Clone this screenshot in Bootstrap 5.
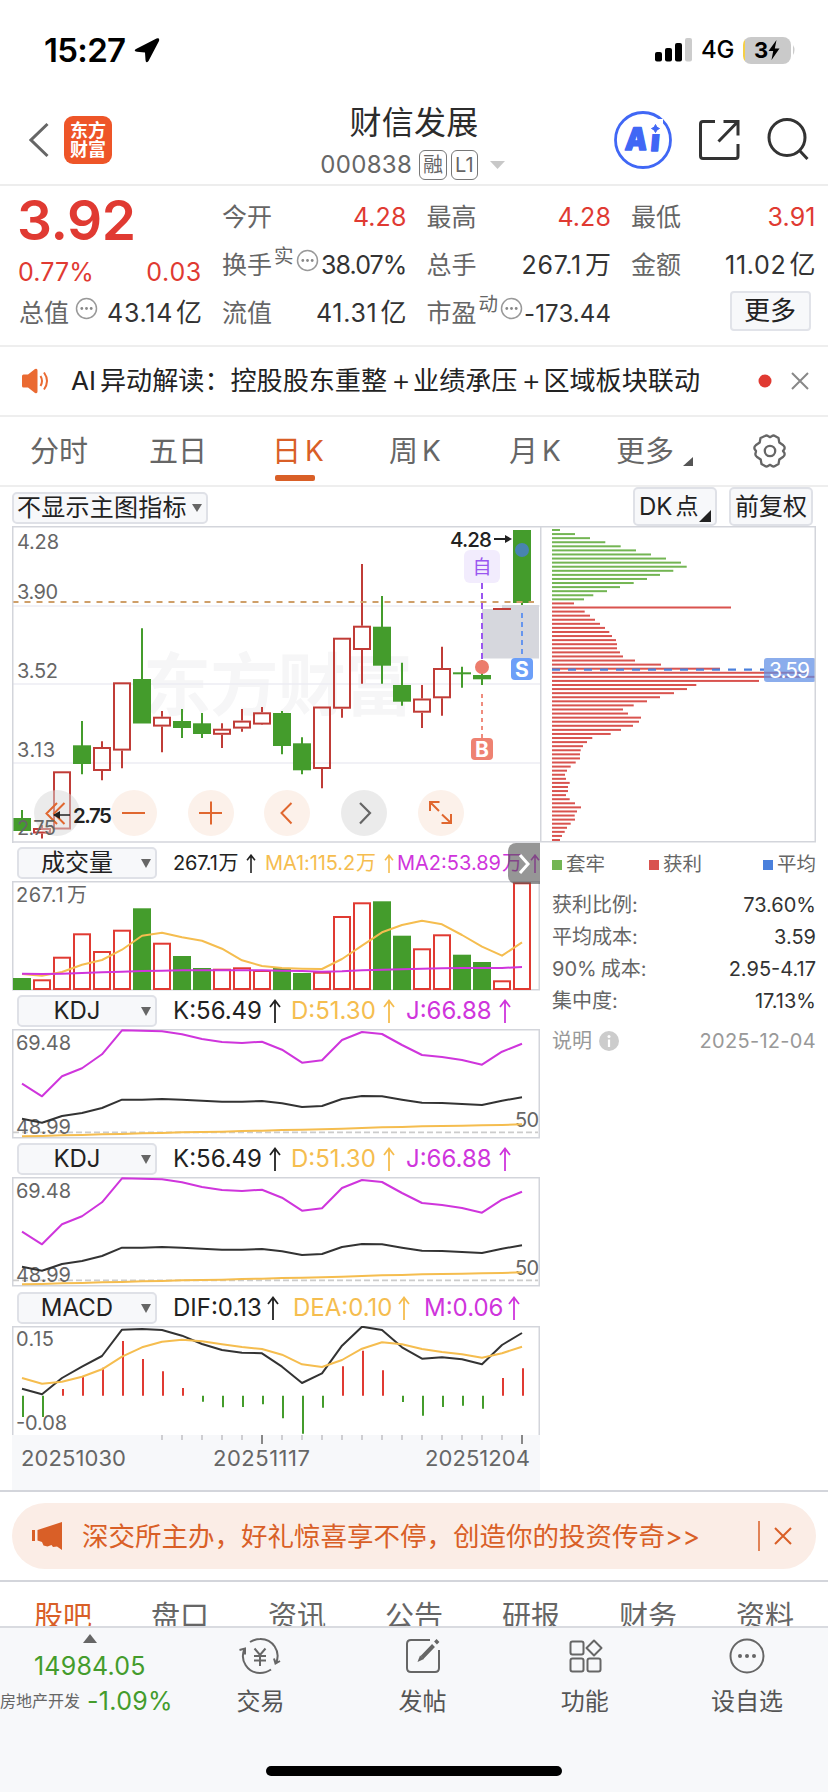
<!DOCTYPE html>
<html lang="zh-CN">
<head>
<meta charset="utf-8">
<meta name="viewport" content="width=device-width, initial-scale=1">
<title>财信发展 000838</title>
<link href="https://cdn.jsdelivr.net/npm/bootstrap@5.3.0/dist/css/bootstrap.min.css" rel="stylesheet">
<style>
  :root { --ink:#333; --grey:#666; --up:#e03a32; --down:#449c2c; --brand:#d95f27; --gold:#f5bd4f; --mag:#cf35dc; --edge:#d3d5db; --soft:#f7f8fa; }
  html, body { height:1792px; overflow:hidden; }
  body { width:828px; font-family:Inter,"Noto Sans CJK SC",sans-serif; color:var(--ink); line-height:1; background:#fff; white-space:nowrap; }
  svg { display:block; flex:none; }
  svg text { font-family:Inter,"Noto Sans CJK SC",sans-serif; }
  .c-up { color:var(--up); } .c-down { color:var(--down); } .c-grey { color:var(--grey); } .c-brand { color:var(--brand); }
  .c-gold { color:var(--gold); } .c-mag { color:var(--mag); }
  .status { height:97px; padding:3px 34px 0 44px; color:#000; }
  .clock { font-size:33px; font-weight:600; letter-spacing:-.7px; width:90px; }
  .net { font-size:24px; font-weight:500; width:42px; padding-left:8px; letter-spacing:-.2px; }
  .batt { width:48px; height:27px; border-radius:8px; background:linear-gradient(90deg,#f5cf45 2px,#cacaca 2px); font-size:22px; font-weight:700; }
  .topbar { height:89px; border-bottom:2px solid #ededed; padding-left:29px; padding-right:19px; padding-bottom:2px; }
  .logo { width:48px; height:48px; border-radius:9px; background:#ee5528; color:#fff; font-size:18px; font-weight:700; line-height:19px; margin-left:15px; padding-top:5px; }
  .heading { width:200px; margin-left:202px; padding-top:9px; }
  .heading h1 { font-size:32px; line-height:34px; margin:0; font-weight:400; color:#2c2c2c; letter-spacing:.3px; }
  .code { font-size:24px; letter-spacing:.3px; color:#666; height:42px; margin-left:-2px; margin-top:4px; }
  .tag { height:30px; border:1.5px solid #777; border-radius:6px; font-size:20px; letter-spacing:0; padding:1px 3px 0; line-height:26px; }
  .quote { height:161px; border-bottom:2px solid #eee; padding-left:19px; gap:20px; font-size:25px; }
  .qcol { width:184.5px; padding-top:7px; }
  .qrow { height:48px; }
  .v { letter-spacing:.1px; }
  .v.wide { letter-spacing:.7px; }
  .v.tight { letter-spacing:-.9px; }
  .v i { font-style:normal; margin-left:3px; font-size:26px; letter-spacing:0; }
  .last-price { font-size:55px; font-weight:600; height:62px; line-height:62px; letter-spacing:-.4px; color:var(--up); margin-left:-2px; }
  .more { width:81px; height:40px; border:2px solid #e1e3e9; border-radius:4px; background:var(--soft); font-size:26px; color:#222; margin:2px 5px 0 0; }
  .supr { font-size:19.5px; position:relative; top:-8px; margin-left:2px; }
  .dots { margin-left:2px; margin-top:-10px; }
  .alertline { height:70px; border-bottom:2px solid #eee; padding-left:22px; font-size:26.1px; color:#222; }
  .alertline b { font-weight:300; font-size:30px; line-height:26px; display:inline-block; width:26px; text-align:center; vertical-align:-1px; letter-spacing:-2px; }
  .periods { height:70px; border-bottom:2px solid #eee; font-size:29px; color:#666; }
  .periods > span { position:relative; height:68px; display:flex; align-items:center; }
  .periods i { font-style:normal; margin-left:4px; font-size:28px; }
  .periods .on { left:-2px; }
  .periods .on::after { content:""; position:absolute; left:3px; bottom:4px; width:40px; height:6px; border-radius:2px; background:var(--brand); }
  .pickrow { height:39px; padding-left:12px; padding-right:15px; font-size:24px; color:#222; }
  .chip { border:2px solid #dfe1e7; border-radius:5px; background:var(--soft); position:relative; }
  .frame { margin-left:12px; }
  .left { width:528px; }
  .right { width:277px; color:#333; font-size:20px; padding:0 1px 0 12px; }
  .right .ln { height:32px; }
  .sq { width:10px; height:10px; margin-right:4px; }
  .ihead { height:38px; padding:2px 0 0 5px; font-size:24px; position:relative; color:#222; }
  .ihead > span { flex:none; }
  .ihead .sel { width:140px; height:32px; margin-right:16px; font-size:24px; }
  .ihead .sel svg { position:absolute; right:4px; top:10px; }
  .ihead .nm { width:116px; text-align:center; }
  .ihead .vol { font-size:20px; }
  .arr { display:inline-block; width:12px; height:24px; margin-left:7px; vertical-align:-4px; fill:none; stroke:currentColor; stroke-width:1.8; }
  .vol .arr { width:10px; height:19px; margin-left:8px; vertical-align:-3px; stroke-width:2; }
  .vol i { font-style:normal; margin-left:1px; font-size:20px; }
  .scroller { position:absolute; right:0; top:0; width:32px; height:41px; border-radius:8px 0 0 8px; background:rgba(80,80,80,.6); }
  .axis { height:55px; background:var(--soft); }
  .promo-wrap { height:92px; border-top:2px solid var(--edge); border-bottom:2px solid var(--edge); padding:11px 12px 0; }
  .promo { height:66px; border-radius:33px; background:#fbede6; color:var(--brand); font-size:26.5px; padding-left:20px; }
  .sections { height:44px; padding:20px 34px 0; font-size:29px; line-height:30px; color:#666; overflow:hidden; }
  .dock { height:166px; border-top:2px solid #d9dbe0; background:var(--soft); color:#555; font-size:24px; position:relative; }
  .dock .cell { width:162.3px; padding-top:7px; }
  .dock .lb { margin-top:7px; height:36px; line-height:36px; }
  .homebar { position:absolute; left:266px; top:138px; width:296px; height:10px; border-radius:5px; background:#000; }
</style>
</head>
<body>
<header>
  <div class="status d-flex align-items-center">
    <span class="clock">15:27</span>
    <svg width="26" height="26" viewBox="0 0 26 26"><path d="M22.500 1.500 2 12q-3 2 1 2.800L11 15.500l.5 7.500q.5 4 3 1L25 4Q26 .5 22.500 1.500Z" fill="#000"/></svg>
    <svg class="ms-auto" width="38" height="24" viewBox="0 0 38 24"><rect y="14" width="7" height="9.500" rx="2"/><rect x="10" y="10" width="7" height="13.500" rx="2"/><rect x="20" y="5" width="7" height="18.500" rx="2"/><rect x="30" width="7" height="23.500" rx="2" fill="#ccc"/></svg>
    <span class="net">4G</span>
    <div class="batt d-flex align-items-center justify-content-center ms-2">3<svg width="12" height="20" viewBox="0 0 12 20"><path d="M8.500 0 .5 11h4.700L3.500 20 11.500 8.500H6.800Z"/></svg></div>
    <svg width="5" height="10" viewBox="0 0 5 10" style="margin-right:-2px"><path d="M2 0q3 5 0 10Z" fill="#ccc"/></svg>
  </div>
  <div class="topbar d-flex align-items-center">
    <svg width="20" height="36" viewBox="0 0 20 36"><path d="M18.500 2 2 18l16.500 16" fill="none" stroke="#666" stroke-width="3"/></svg>
    <div class="logo text-center">东方<br>财富</div>
    <div class="heading d-flex flex-column align-items-center align-self-start">
      <h1>财信发展</h1>
      <div class="code d-flex align-items-center">000838<span class="tag" style="margin-left:7px">融</span><span class="tag ms-1">L1</span><svg style="margin-left:8px" width="20" height="8" viewBox="-4 0 20 8"><path d="M0 0h15L7.500 8Z" fill="#c8c8c8"/></svg></div>
    </div>
    <svg class="ms-auto" width="58" height="58" viewBox="0 0 58 58"><circle cx="29" cy="29" r="27.500" fill="#fff" stroke="#4067f5" stroke-width="2.800"/><g fill="#4067f5" stroke="#4067f5" stroke-width="1.500" stroke-linejoin="round" transform="translate(3.500 0) skewX(-5)"><text x="10.500" y="39.500" font-size="31" font-weight="900" textLength="22" lengthAdjust="spacingAndGlyphs">A</text><text x="36" y="40" font-size="31" font-weight="900" textLength="9" lengthAdjust="spacingAndGlyphs">i</text></g><path d="M35 8h14v15H35Z" fill="#fff"/><path d="M41.500 13.500q1 3.500 4 4-3 .8-4 4-1-3.200-4-4 3-.5 4-4Z" fill="#4067f5" stroke="#4067f5"/></svg>
    <svg style="margin-left:26px" width="42" height="42" viewBox="0 0 42 42" fill="none" stroke="#333" stroke-width="3"><path d="M17 2.500H5Q2.500 2.500 2.500 5v32q0 2.500 2.500 2.500h32.500q2.500 0 2.500-2.500V25M25.500 2.500H40V16.500M39 3.500 20.500 22.500"/></svg>
    <svg style="margin-left:26px" width="43" height="43" viewBox="0 0 43 43" fill="none" stroke="#333" stroke-width="3"><circle cx="21" cy="19.500" r="18"/><path d="m33 32 8.500 9"/></svg>
  </div>
</header>

<section class="quote d-flex">
  <div style="width:183px;padding-top:3px">
    <div class="last-price">3.92</div>
    <div class="d-flex justify-content-between align-items-center c-up" style="height:42px"><span class="v" style="margin-left:-1px">0.77%</span><span class="v wide">0.03</span></div>
    <div class="d-flex align-items-center" style="height:40px"><span class="c-grey">总值</span><svg class="dots" style="margin-left:6px" width="23" height="23"><use href="#more-dots"/></svg><span class="v wide ms-auto">43.14<i>亿</i></span></div>
  </div>
  <div class="qcol">
    <div class="qrow d-flex align-items-center"><span class="c-grey">今开</span><span class="v ms-auto c-up">4.28</span></div>
    <div class="qrow d-flex align-items-center"><span class="c-grey">换手</span><span class="supr c-grey">实</span><svg class="dots" width="23" height="23"><use href="#more-dots"/></svg><span class="v tight ms-auto">38.07%</span></div>
    <div class="qrow d-flex align-items-center"><span class="c-grey">流值</span><span class="v wide ms-auto">41.31<i>亿</i></span></div>
  </div>
  <div class="qcol">
    <div class="qrow d-flex align-items-center"><span class="c-grey">最高</span><span class="v ms-auto c-up">4.28</span></div>
    <div class="qrow d-flex align-items-center"><span class="c-grey">总手</span><span class="v wide ms-auto">267.1<i>万</i></span></div>
    <div class="qrow d-flex align-items-center"><span class="c-grey">市盈</span><span class="supr c-grey">动</span><svg class="dots" width="23" height="23"><use href="#more-dots"/></svg><span class="v ms-auto" style="font-size:24px;padding-top:2px">-173.44</span></div>
  </div>
  <div class="qcol">
    <div class="qrow d-flex align-items-center"><span class="c-grey">最低</span><span class="v ms-auto c-up">3.91</span></div>
    <div class="qrow d-flex align-items-center"><span class="c-grey">金额</span><span class="v wide ms-auto">11.02<i>亿</i></span></div>
    <div class="d-flex justify-content-end"><span class="more d-flex align-items-center justify-content-center">更多</span></div>
  </div>
</section>

<section class="alertline d-flex align-items-center">
  <svg width="28" height="26" viewBox="0 0 28 26"><path d="M0 8q0-1.500 1.500-1.500H6L13 1q2.500-1 2.500 1.500v21q0 2.500-2.500 1.500L6 19.500H1.500Q0 19.500 0 18Z" fill="#ea6a32"/><path d="M18.500 8q3 5 0 10M22 4.500q6 8.500 0 17" fill="none" stroke="#ea6a32" stroke-width="2"/></svg>
  <span style="margin-left:21px"><span style="margin-right:4px">AI</span>异动解读：控股股东重整<b>+</b>业绩承压<b>+</b>区域板块联动</span>
  <svg class="ms-auto" width="51" height="20" viewBox="0 0 51 20" style="margin-right:19px"><circle cx="7" cy="10" r="6.500" fill="#e03a32"/><path d="m34 2 16 16M50 2 34 18" stroke="#888" stroke-width="2"/></svg>
</section>

<nav class="periods d-flex">
  <span style="margin-left:30px;width:119px">分时</span><span style="width:125px">五日</span><span class="on c-brand" style="width:115px">日<i>K</i></span><span style="width:120px">周<i>K</i></span><span style="width:107px">月<i>K</i></span><span style="width:67px">更多</span>
  <svg width="10" height="9" viewBox="0 0 10 9" style="margin-top:40px"><path d="M10 0v9H0Z" fill="#555"/></svg>
  <svg width="34" height="34" viewBox="0 0 34 34" style="margin:17px 0 0 60px" fill="none" stroke="#666" stroke-width="2.300" stroke-linejoin="round"><path d="M12 2.500q1.500-1 3 0l2 1.200 2-1.200q1.500-1 3 0l3.500 2 .8 4.500 4 2.800q2 1.500 1 4l-1.300 1.700 1.300 1.700q1 2.500-1 4l-4 2.800-.8 4.500-3.500 2q-1.500 1-3 0l-2-1.200-2 1.200q-1.500 1-3 0l-3.500-2-.8-4.500-4-2.800q-2-1.500-1-4L3 17.500l-1.300-1.700q-1-2.500 1-4l4-2.800.8-4.500Z" transform="translate(0 -.5)"/><circle cx="17" cy="17" r="5.200"/></svg>
</nav>

<div class="pickrow d-flex align-items-start">
  <span class="chip d-flex align-items-center" style="margin-top:5px;width:196px;height:32px;padding-left:3px;letter-spacing:.25px">不显示主图指标<svg width="10" height="8" viewBox="0 0 10 8" style="margin-left:5px"><path d="M0 0h10L5 8Z" fill="#666"/></svg></span>
  <span class="chip ms-auto d-flex align-items-center" style="width:84px;height:39px;padding-left:4px">DK<span style="margin-left:3px;font-size:23px">点</span><svg width="12" height="12" viewBox="0 0 12 12" style="position:absolute;right:4px;bottom:2px"><path d="M12 0v12H0Z" fill="#222"/></svg></span>
  <span class="chip d-flex align-items-center" style="margin-left:12px;width:84px;height:39px;padding-left:4px">前复权</span>
</div>

<main class="frame">
  <div class="d-flex"><svg id="kline" width="528" height="317" viewBox="12 526 528 317"></svg><svg id="cost" width="277" height="317" viewBox="540 526 277 317"></svg></div>
  <div class="d-flex">
    <div class="left">
      <div class="ihead d-flex align-items-center">
        <span class="chip sel d-flex align-items-center"><span class="nm">成交量</span><svg width="10" height="9" viewBox="0 0 10 9"><path d="M0 0h10L5 9Z" fill="#666"/></svg></span>
        <span class="vol" style="width:92px;letter-spacing:-.2px">267.1<i>万</i><svg class="arr" viewBox="0 0 12 24"><use href="#arrow-up"/></svg></span><span class="vol c-gold" style="width:132px;letter-spacing:-.1px">MA1:115.2<i>万</i><svg class="arr" viewBox="0 0 12 24"><use href="#arrow-up"/></svg></span><span class="vol c-mag">MA2:53.89<i>万</i><svg class="arr" viewBox="0 0 12 24"><use href="#arrow-up"/></svg></span>
        <span class="scroller d-flex align-items-center justify-content-center"><svg width="14" height="22" viewBox="0 0 14 22"><path d="m3 2 8 9-8 9" fill="none" stroke="#fff" stroke-width="3"/></svg></span>
      </div>
      <svg id="volume" width="528" height="110" viewBox="12 881 528 110"></svg>
      <div class="ihead d-flex align-items-center">
        <span class="chip sel d-flex align-items-center"><span class="nm">KDJ</span><svg width="10" height="9" viewBox="0 0 10 9"><path d="M0 0h10L5 9Z" fill="#666"/></svg></span>
        <span style="width:118px">K:56.49<svg class="arr" viewBox="0 0 12 24"><use href="#arrow-up"/></svg></span><span class="c-gold" style="width:115px">D:51.30<svg class="arr" viewBox="0 0 12 24"><use href="#arrow-up"/></svg></span><span class="c-mag">J:66.88<svg class="arr" viewBox="0 0 12 24"><use href="#arrow-up"/></svg></span>
      </div>
      <svg id="kdj1" width="528" height="110" viewBox="12 1029 528 110"></svg>
      <div class="ihead d-flex align-items-center">
        <span class="chip sel d-flex align-items-center"><span class="nm">KDJ</span><svg width="10" height="9" viewBox="0 0 10 9"><path d="M0 0h10L5 9Z" fill="#666"/></svg></span>
        <span style="width:118px">K:56.49<svg class="arr" viewBox="0 0 12 24"><use href="#arrow-up"/></svg></span><span class="c-gold" style="width:115px">D:51.30<svg class="arr" viewBox="0 0 12 24"><use href="#arrow-up"/></svg></span><span class="c-mag">J:66.88<svg class="arr" viewBox="0 0 12 24"><use href="#arrow-up"/></svg></span>
      </div>
      <svg id="kdj2" width="528" height="110" viewBox="12 1029 528 110"></svg>
      <div class="ihead d-flex align-items-center" style="height:39px">
        <span class="chip sel d-flex align-items-center"><span class="nm">MACD</span><svg width="10" height="9" viewBox="0 0 10 9"><path d="M0 0h10L5 9Z" fill="#666"/></svg></span>
        <span style="width:120px">DIF:0.13<svg class="arr" style="margin-left:5px" viewBox="0 0 12 24"><use href="#arrow-up"/></svg></span><span class="c-gold" style="width:131px">DEA:0.10<svg class="arr" style="margin-left:5px" viewBox="0 0 12 24"><use href="#arrow-up"/></svg></span><span class="c-mag">M:0.06<svg class="arr" style="margin-left:5px" viewBox="0 0 12 24"><use href="#arrow-up"/></svg></span>
      </div>
      <svg id="macd" width="528" height="109" viewBox="12 1326 528 109"></svg>
      <svg class="axis" id="axis" width="528" height="55" viewBox="12 1435 528 55"></svg>
    </div>
    <div class="right">
      <div class="d-flex align-items-center c-grey" style="height:43px;font-size:19.500px"><span class="sq" style="background:#73b553"></span><span style="width:83px">套牢</span><span class="sq" style="background:#d9534f"></span><span>获利</span><span class="sq ms-auto" style="background:#4a80dc"></span><span>平均</span></div>
      <div style="height:3px"></div>
      <div class="ln d-flex align-items-center justify-content-between"><span class="c-grey">获利比例:</span><span>73.60%</span></div>
      <div class="ln d-flex align-items-center justify-content-between"><span class="c-grey">平均成本:</span><span>3.59</span></div>
      <div class="ln d-flex align-items-center justify-content-between"><span class="c-grey">90%<span style="margin-left:4px">成本:</span></span><span>2.95-4.17</span></div>
      <div class="ln d-flex align-items-center justify-content-between"><span class="c-grey">集中度:</span><span>17.13%</span></div>
      <div class="d-flex align-items-center" style="height:48px;color:#999">说明<svg style="margin-left:7px" width="20" height="20"><circle cx="10" cy="10" r="10" fill="#ccc"/><path d="M10 8.500V16" stroke="#fff" stroke-width="2.200"/><circle cx="10" cy="5.500" r="1.500" fill="#fff"/></svg><span class="ms-auto" style="letter-spacing:.3px">2025-12-04</span></div>
    </div>
  </div>
</main>

<div class="promo-wrap">
  <div class="promo d-flex align-items-center">
    <svg width="31" height="28" viewBox="0 0 31 28" fill="#d95f27"><rect y="8" width="3" height="11"/><path d="M5.500 8 30 0v28l-5-3.500-4 .5-1.500-2-4 1.500-4-1L10 20l-4.500-1.500Z"/></svg>
    <span style="margin-left:19px">深交所主办，好礼惊喜享不停，创造你的投资传奇&gt;&gt;</span>
    <svg class="ms-auto" style="margin-right:24px" width="34" height="46" viewBox="0 0 34 46" stroke="#d95f27"><path d="M1 8v30" stroke-width="1.500"/><path d="m17 15 16 16M33 15 17 31" stroke-width="2"/></svg>
  </div>
</div>

<nav class="sections d-flex justify-content-between"><span class="c-brand">股吧</span><span>盘口</span><span>资讯</span><span>公告</span><span>研报</span><span>财务</span><span>资料</span></nav>

<footer class="dock d-flex">
  <div style="width:179.5px" class="c-down">
    <svg width="14" height="9" viewBox="0 0 14 9" style="margin:6px 0 0 83px"><path d="M7 0l7 9H0Z" fill="#666"/></svg>
    <div style="margin-left:34px;height:44px;line-height:44px;font-size:25px;letter-spacing:.2px;padding-top:1px">14984.05</div>
    <div class="d-flex align-items-center" style="height:28px"><span class="c-grey" style="font-size:16px;width:87px">房地产开发</span><span style="font-size:25px;letter-spacing:.3px">-1.09%</span></div>
  </div>
  <div class="cell d-flex flex-column align-items-center"><svg width="42" height="42" viewBox="0 0 42 42" fill="none" stroke="#666" stroke-width="2"><path d="M11 7Q16 4 21 4a17 17 0 0 1 16 24M32 34.500Q27 38 21 38A17 17 0 0 1 5.500 14M.5 15l5.500-1.500 0 6M41 26l-4.500 2.500-1.500-5M15.500 13.500l5.500 6.500 5.500-6.500M21 20v11M15 21h12M15 25.500h12"/></svg><span class="lb">交易</span></div>
  <div class="cell d-flex flex-column align-items-center"><svg width="42" height="42" viewBox="0 0 42 42" fill="none" stroke="#666" stroke-width="2"><path d="M28 5H9Q5 5 5 9v24q0 4 4 4h24q4 0 4-4V15"/><path d="M36 5.500 33.500 8M31.500 10.500 20 22.500" stroke-width="4"/><path d="m15.500 27 2.500-6.500 4 3.500Z" fill="#666" stroke="none"/></svg><span class="lb">发帖</span></div>
  <div class="cell d-flex flex-column align-items-center"><svg width="42" height="42" viewBox="0 0 42 42" fill="none" stroke="#666" stroke-width="2"><rect x="6.500" y="6.500" width="13" height="13" rx="2"/><rect x="6.500" y="23.500" width="13" height="13" rx="2"/><rect x="23.500" y="23.500" width="13" height="13" rx="2"/><path d="M30 5.500 37.500 13 30 20.500 22.500 13Z" stroke-linejoin="round"/></svg><span class="lb">功能</span></div>
  <div class="cell d-flex flex-column align-items-center"><svg width="42" height="42" viewBox="0 0 42 42"><circle cx="21" cy="21" r="16.500" fill="none" stroke="#666" stroke-width="2"/><g fill="#666"><circle cx="14" cy="21" r="2"/><circle cx="21" cy="21" r="2"/><circle cx="28" cy="21" r="2"/></g></svg><span class="lb">设自选</span></div>
  <div class="homebar"></div>
</footer>

<svg width="0" height="0" style="position:absolute"><defs><g id="arrow-up"><path d="M6 24V1.500M1 8 6 1.500 11 8"/></g><g id="more-dots"><circle cx="11.500" cy="11.500" r="10" fill="none" stroke="#999" stroke-width="1.500"/><g fill="#888"><circle cx="6.800" cy="11.500" r="1.400"/><circle cx="11.500" cy="11.500" r="1.400"/><circle cx="16.200" cy="11.500" r="1.400"/></g></g></defs></svg>

<script src="https://cdn.jsdelivr.net/npm/bootstrap@5.3.0/dist/js/bootstrap.bundle.min.js"></script>
<script>
const G = '#449c2c', R = '#c03c37', R2 = '#e03a32';
const put = (id, s) => { document.getElementById(id).innerHTML = s; };
const X = i => 22 + 20 * i;
const rect = (x, y, w, h, a) => `<rect x="${x}" y="${y}" width="${w}" height="${h}" ${a}/>`;
const line = (x1, y1, x2, y2, c, w, e = '') => `<path d="M${x1} ${y1}L${x2} ${y2}" stroke="${c}" stroke-width="${w}" fill="none" ${e}/>`;
const txt = (x, y, s, len, e = '') => `<text x="${x}" y="${y}" font-size="20" fill="#666" textLength="${len}" ${e}>${s}</text>`;
const curve = (ys, base, c) => `<polyline fill="none" stroke="${c}" stroke-width="2" stroke-linejoin="round" points="${ys.map((v, i) => X(i) + ',' + (base + v / 3).toFixed(1)).join(' ')}"/>`;
const box = (x, y, w, h) => rect(x + .75, y + .75, w - 1.5, h - 1.5, 'fill="none" stroke="#d3d5db" stroke-width="1.5"');

/* candles: up?, body top, body bottom, wick top, wick bottom */
const K = [[0,818,831,810,831],[1,828,833.5,825,838.5],[1,771.3,829.5,771.3,829.5],[0,745.3,764,721,774.3],[1,747,771,741.3,780.3],[1,682.3,750.6,682.3,768.3],[0,679,723.5,628.3,723],[1,716.7,726.6,711,752.3],[0,721,728,709,738],[0,723.3,734,713,738],[1,728.7,734.8,723.3,748],[1,720.6,728.6,709,731.7],[1,712.3,724.6,707,724],[0,713,746,711,754.3],[0,743.3,770.3,737.3,774.3],[1,706.5,769,706.5,788.3],[1,637.7,708.7,637.7,717.7],[1,625.7,650,564,683.7],[0,626.7,665.7,596,683.7],[0,685,701.7,662.7,705.7],[1,698.5,712.7,685,728],[1,668,698.3,646.7,715.7],[0,672.3,674.3,666.7,687.7],[0,675,679.3,660,685],[1,608,610,608,610],[0,530,603,530,605]];
let s = '<text x="143" y="710" font-size="68" font-weight="700" textLength="270" fill="#f6f6f7">东方财富</text>';
[606, 684, 763].forEach(y => s += line(12, y, 540, y, '#ececf3', 1.3));
s += rect(482, 609, 57, 49.5, 'fill="#d6d7dd"') + rect(502, 605, 37, 5, 'fill="#d6d7dd"');
K.forEach(([up, a, b, t, w], i) => {
  const x = X(i);
  if (up && b - a > 3) s += line(x, t, x, a, R, 2) + line(x, b, x, w, R, 2) + rect(x - 8, a + 1, 16, b - a - 2, `fill="none" stroke="${R}" stroke-width="2"`);
  else s += line(x, t, x, w, up ? R : G, 2) + rect(x - 9, a, 18, b - a, `fill="${up ? R : G}"`);
});
s += line(12, 602, 534, 602, '#cf9f69', 2.2, 'stroke-dasharray="6 6" stroke-dashoffset="-0.5"');
s += line(482, 583, 482, 660, '#9a55f0', 2, 'stroke-dasharray="6 4"') + line(522, 613, 522, 656, '#5b8ff0', 1.8, 'stroke-dasharray="5 4"') + line(482, 694, 482, 738, '#ee8070', 1.8, 'stroke-dasharray="4 4"');
s += '<circle cx="522" cy="550" r="7" fill="#4884b0"/><circle cx="482" cy="667" r="7" fill="#ec7c6c"/>';
s += rect(464, 550, 36, 33, 'rx="6" fill="#f2ecfd"') + '<text x="482" y="574" text-anchor="middle" font-size="19" fill="#9a55f0">自</text>';
s += rect(511, 658, 22, 22, 'rx="4" fill="#6c9ff8"') + '<text x="522" y="676.500" text-anchor="middle" font-size="21" font-weight="700" fill="#fff">S</text>';
s += rect(471, 738, 22, 22, 'rx="4" fill="#ee8272"') + '<text x="482" y="756.500" text-anchor="middle" font-size="21" font-weight="700" fill="#fff">B</text>';
[57, 134, 211, 287, 364, 441].forEach((x, i) => s += `<circle cx="${x}" cy="813" r="23" fill="${i == 0 || i == 4 ? 'rgba(215,215,215,.5)' : '#fcf1ea'}"/>`);
const O = '#e0672f';
s += `<g fill="none" stroke="${O}" stroke-width="2"><path d="M57 803 46.500 813.500 57 824M64.500 803 54 813.500 64.500 824M122 813h23M199 813h23M211 801.500v23M291.500 803 281.500 813 291.500 823.500M430 811v-9h9.500M430.500 802.500l8.500 8.500M451 814v9h-9.500M450.500 822.500 442 814.500"/></g>`;
s += '<path d="M360 803l10 10-10 10.500" fill="none" stroke="#666" stroke-width="2.200"/>';
[[549, '4.28', 42], [599, '3.90', 41], [678, '3.52', 41], [757, '3.13', 38], [835, '2.75', 39]].forEach(([y, t, l]) => s += txt(17, y, t, l));
s += '<text x="450" y="546.500" font-size="20.500" font-weight="500" fill="#222" textLength="42">4.28</text><path d="M494 539h16" stroke="#222" stroke-width="2"/><path d="m505 535 7 4-7 4Z" fill="#222"/>';
s += '<text x="73" y="823" font-size="20.500" font-weight="600" fill="#222" textLength="39">2.75</text><path d="M70 815H54" stroke="#222" stroke-width="1.500"/><path d="m60 811-7 4 7 4Z" fill="#222"/>';
put('kline', s + '<path d="M12.750 843V526.750H540M12 842H540" fill="none" stroke="#d3d5db" stroke-width="1.500"/>');

/* cost distribution: bar lengths in thirds of a pixel */
const C = [60,105,150,196,242,288,333,378,423,440,400,360,321,281,240,201,160,132,102,573,134,150,165,180,195,208,216,228,231,231,240,249,285,363,540,805,827,657,469,441,402,360,321,281,249,264,303,297,279,243,212,157,141,129,122,120,120,107,92,81,75,78,89,84,84,78,89,105,123,111,104,105,92,81,74,66,60];
s = C.map((v, i) => rect(552, (529 + i * 4.079).toFixed(2), ((v - 36) / 3).toFixed(1), 2, `fill="${i < 18 ? '#73b553' : '#d9534f'}"`)).join('');
s += line(552, 669.7, 764, 669.7, '#4a80dc', 2.2, 'stroke-dasharray="8 8"') + rect(764, 658, 52, 24, 'rx="3" fill="#5e8ee4" opacity=".72"') + '<text x="769" y="677.500" font-size="21" fill="#fff" textLength="41">3.59</text>';
put('cost', s + box(540, 526, 276, 316.5));

/* volume */
const V = [[0,978],[1,979.3],[1,956.7],[1,933.3],[1,951],[1,929.7],[0,908.3],[1,942.7],[0,956],[0,968],[1,968.7],[1,967.3],[1,970],[0,968],[0,973],[1,971.7],[1,916],[1,902.3],[0,901.3],[0,935.7],[1,948.3],[1,934.3],[0,954.7],[0,962],[1,980.3],[1,882.3]];
s = box(12, 881, 528, 109.5) + V.map(([up, y], i) => up ? rect(X(i) - 8, y + 1, 16, 989 - y - 1, `fill="#fff" stroke="${R2}" stroke-width="2"`) : rect(X(i) - 9, y, 18, 990 - y, `fill="${G}"`)).join('');
s += curve([402,407,396,374,360,329,287,278,292,302,326,361,378,384,386,387,357,317,277,255,242,253,285,320,347,307], 840, '#f5bd4f') + curve([401,402,401,399,397,395,393,392,391,391,391,391,391,392,393,395,394,391,389,388,386,385,384,384,384,381], 840, '#cf35dc');
put('volume', s + txt(16, 902, '267.1<tspan dx="3">万</tspan>', 71));

/* KDJ */
s = box(12, 1029, 528, 109.5) + line(13, 1132.3, 538, 1132.3, '#ccc', 1.8, 'stroke-dasharray="6 3"');
s += txt(16, 1050, '69.48', 55) + txt(16, 1134, '48.99', 55) + txt(515, 1127, '50', 24);
s += curve([836,848,828,819,804,779,779,777,779,782,785,785,783,790,801,798,777,768,769,779,788,789,792,795,782,772], 840, '#333') + curve([889,888,886,885,883,882,880,879,877,876,875,873,872,870,869,868,866,864,862,861,859,858,857,856,855,853], 840, '#f5bd4f') + curve([731,769,709,685,643,571,572,574,583,597,606,609,605,629,668,661,600,576,582,615,645,651,660,674,635,611], 840, '#cf35dc');
put('kdj1', s); put('kdj2', s);

/* MACD */
s = '<path d="M12.750 1435V1326.750H539.250V1435" fill="none" stroke="#d3d5db" stroke-width="1.500"/>' + txt(16, 1346, '0.15', 38) + txt(16, 1430, '-0.08', 51);
[861,861,777,740,713,633,687,724,774,815,832,831,823,865,911,833,709,662,721,816,857,831,827,836,744,715].forEach((v, i) => s += line(X(i) + 1, 1395.7, X(i) + 1, 1130 + v / 3, v > 797 ? G : R2, 2));
s += curve([776,793,744,710,678,599,597,600,617,642,660,668,670,710,759,730,647,590,600,652,686,682,688,703,645,609], 1130, '#333') + curve([744,761,755,740,718,680,652,635,629,634,643,651,657,674,703,711,690,656,637,643,657,666,673,683,670,650], 1130, '#f5bd4f');
put('macd', s);

s = '';
for (let i = 7; i < 26; i++) s += i == 12 || i == 25 ? line(X(i), 1435, X(i), 1444, '#888', 2) : line(X(i), 1435, X(i), 1440, '#c4c4c8', 1.6);
[[21, '20251030', 105], [213, '20251117', 97], [425, '20251204', 105]].forEach(([x, t, l]) => s += `<text x="${x}" y="1466" font-size="22" fill="#666" textLength="${l}">${t}</text>`);
put('axis', s);
</script>
</body>
</html>
